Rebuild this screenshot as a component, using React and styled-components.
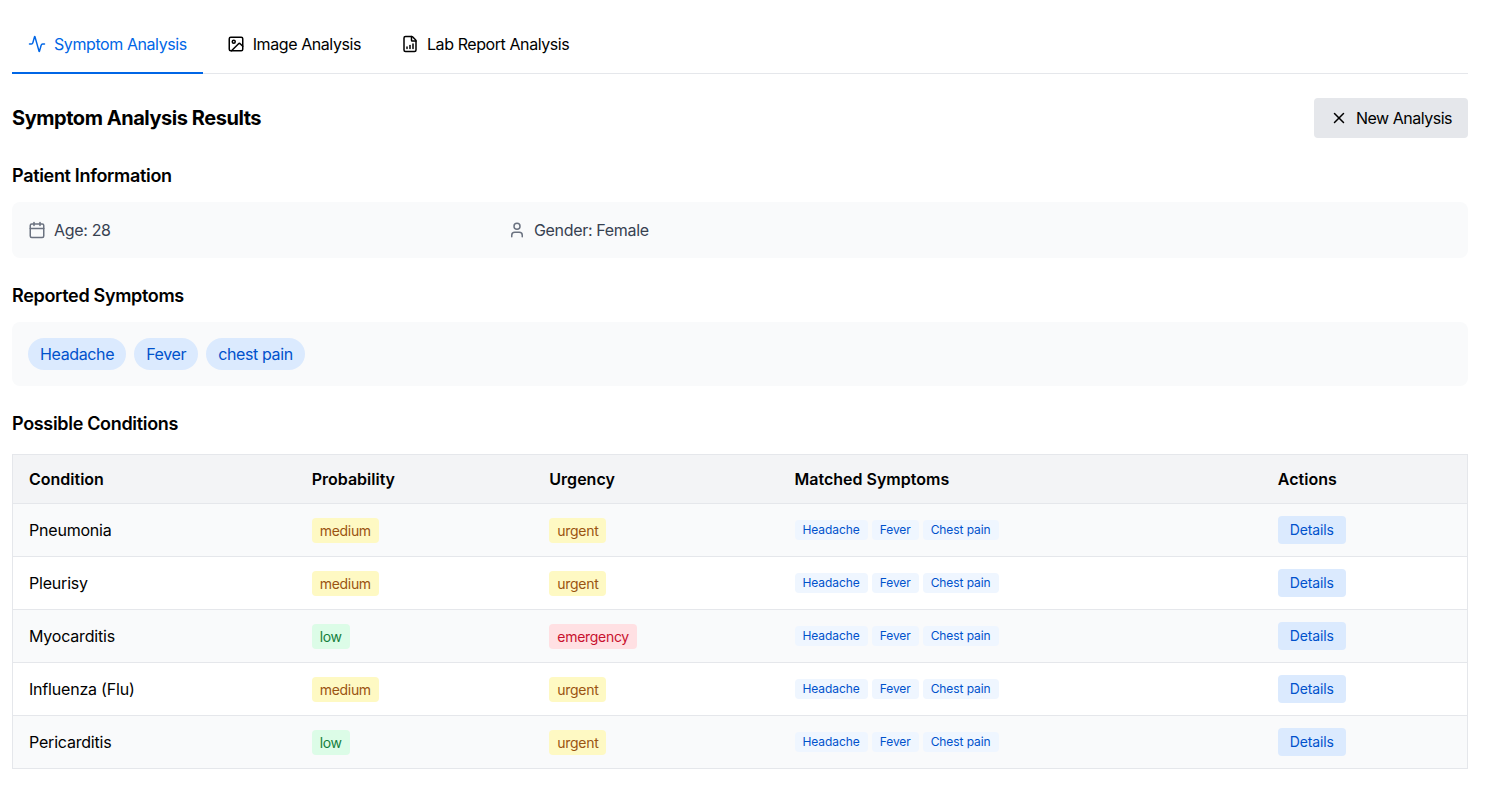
import React from 'react';
import styled, { createGlobalStyle } from 'styled-components';
import { Activity, Image, FileChartColumnIncreasing, X, Calendar, User } from 'lucide-react';

const Global = createGlobalStyle`
  html, body { margin: 0; padding: 0; background: #fff; }
  body { font-family: Inter, "Liberation Sans", sans-serif; color: #000; }
  * { box-sizing: border-box; }
`;

const Page = styled.div`
  padding: 15px 20px 26px 12px;
  display: flex;
  flex-direction: column;
`;

const Tabs = styled.div`
  display: flex;
  gap: 8px;
  border-bottom: 1px solid #e5e7eb;
  margin-bottom: 24px;
`;

const Tab = styled.button`
  display: flex;
  align-items: center;
  gap: 8px;
  height: 59px;
  padding: 0 16px;
  margin-bottom: -1px;
  border: 0;
  border-bottom: 2px solid ${p => (p.$active ? '#0066e6' : 'transparent')};
  background: none;
  font: 400 16px/24px Inter, sans-serif;
  letter-spacing: -0.42px;
  color: ${p => (p.$active ? '#0066e6' : '#000')};
`;

const ResultsHead = styled.div`
  display: flex;
  justify-content: space-between;
  align-items: center;
  margin-bottom: 24px;
`;

const Title = styled.h2`
  margin: 0;
  font-size: 20px;
  line-height: 40px;
  font-weight: 700;
  letter-spacing: -0.46px;
`;

const NewButton = styled.button`
  display: flex;
  align-items: center;
  gap: 8px;
  height: 40px;
  padding: 0 16px;
  border: 0;
  border-radius: 4px;
  background: #e5e7eb;
  font: 400 16px/24px Inter, sans-serif;
  letter-spacing: -0.48px;
  color: #000;
`;

const Heading = styled.h3`
  margin: 0 0 13px;
  font-size: 18px;
  line-height: 27px;
  font-weight: 600;
  letter-spacing: -0.32px;
`;

const Panel = styled.div`
  background: #f9fafb;
  border-radius: 8px;
  padding: 16px;
  margin-bottom: 24px;
`;

const InfoGrid = styled.div`
  display: grid;
  grid-template-columns: repeat(3, 1fr);
  gap: 16px;
`;

const InfoItem = styled.div`
  display: flex;
  align-items: center;
  gap: 8px;
  height: 24px;
  font-size: 16px;
  letter-spacing: -0.33px;
  color: #374151;
  svg { color: #6b7280; }
`;

const Pills = styled.div`
  display: flex;
  gap: 8px;
`;

const Pill = styled.span`
  padding: 4px 12px;
  border-radius: 16px;
  background: #dbeafe;
  color: #0052cc;
  font-size: 16px;
  line-height: 24px;
  letter-spacing: -0.37px;
`;

const Table = styled.table`
  width: 1456px;
  margin-top: 4px;
  table-layout: fixed;
  border-collapse: collapse;
  border: 1px solid #e5e7eb;
`;

const Th = styled.th`
  background: #f3f4f6;
  height: 49px;
  padding: 0 16px;
  text-align: left;
  font-size: 16px;
  font-weight: 600;
  border-bottom: 1px solid #e5e7eb;
`;

const Row = styled.tr`
  background: ${p => (p.$odd ? '#f9fafb' : '#fff')};
`;

const Td = styled.td`
  height: 53px;
  padding: 0 16px;
  font-size: 16px;
  letter-spacing: -0.2px;
  border-bottom: 1px solid #e5e7eb;
`;

const tones = {
  medium: ['#fef9c3', '#9a5412'],
  urgent: ['#fef9c3', '#9a5412'],
  low: ['#dcfce7', '#15803d'],
  emergency: ['#ffe0e3', '#c8102e'],
};

const Badge = styled.span`
  display: inline-block;
  padding: 4px 8px;
  border-radius: 4px;
  font-size: 14px;
  line-height: 17px;
  letter-spacing: -0.3px;
  vertical-align: middle;
  background: ${p => tones[p.$tone][0]};
  color: ${p => tones[p.$tone][1]};
`;

const Matched = styled.div`
  display: flex;
  gap: 4px;
`;

const MatchTag = styled.span`
  padding: 2px 8px;
  border-radius: 4px;
  background: #eff6ff;
  color: #0052cc;
  font-size: 12px;
  line-height: 16px;
  letter-spacing: -0.08px;
`;

const Details = styled.button`
  display: block;
  height: 28px;
  padding: 0 12px;
  border: 0;
  border-radius: 4px;
  background: #dbeafe;
  color: #0052cc;
  font: 400 14px/20px Inter, sans-serif;
  letter-spacing: -0.15px;
`;

const rows = [
  ['Pneumonia', 'medium', 'urgent'],
  ['Pleurisy', 'medium', 'urgent'],
  ['Myocarditis', 'low', 'emergency'],
  ['Influenza (Flu)', 'medium', 'urgent'],
  ['Pericarditis', 'low', 'urgent'],
];

export default function App() {
  return (
    <Page>
      <Global />
      <Tabs>
        <Tab $active><Activity size={18} />Symptom Analysis</Tab>
        <Tab><Image size={18} />Image Analysis</Tab>
        <Tab><FileChartColumnIncreasing size={18} />Lab Report Analysis</Tab>
      </Tabs>
      <ResultsHead>
        <Title>Symptom Analysis Results</Title>
        <NewButton><X size={18} />New Analysis</NewButton>
      </ResultsHead>
      <Heading>Patient Information</Heading>
      <Panel>
        <InfoGrid>
          <InfoItem><Calendar size={18} />Age: 28</InfoItem>
          <InfoItem><User size={18} />Gender: Female</InfoItem>
        </InfoGrid>
      </Panel>
      <Heading>Reported Symptoms</Heading>
      <Panel>
        <Pills>
          <Pill>Headache</Pill>
          <Pill>Fever</Pill>
          <Pill>chest pain</Pill>
        </Pills>
      </Panel>
      <Heading>Possible Conditions</Heading>
      <Table>
        <colgroup>
          <col width="283" />
          <col width="237.5" />
          <col width="245" />
          <col width="483" />
          <col width="205.5" />
        </colgroup>
        <thead>
          <tr>
            <Th>Condition</Th>
            <Th>Probability</Th>
            <Th>Urgency</Th>
            <Th>Matched Symptoms</Th>
            <Th>Actions</Th>
          </tr>
        </thead>
        <tbody>
          {rows.map(([name, prob, urg], i) => (
            <Row key={name} $odd={i % 2 === 0}>
              <Td>{name}</Td>
              <Td><Badge $tone={prob}>{prob}</Badge></Td>
              <Td><Badge $tone={urg}>{urg}</Badge></Td>
              <Td>
                <Matched>
                  <MatchTag>Headache</MatchTag>
                  <MatchTag>Fever</MatchTag>
                  <MatchTag>Chest pain</MatchTag>
                </Matched>
              </Td>
              <Td><Details>Details</Details></Td>
            </Row>
          ))}
        </tbody>
      </Table>
    </Page>
  );
}
